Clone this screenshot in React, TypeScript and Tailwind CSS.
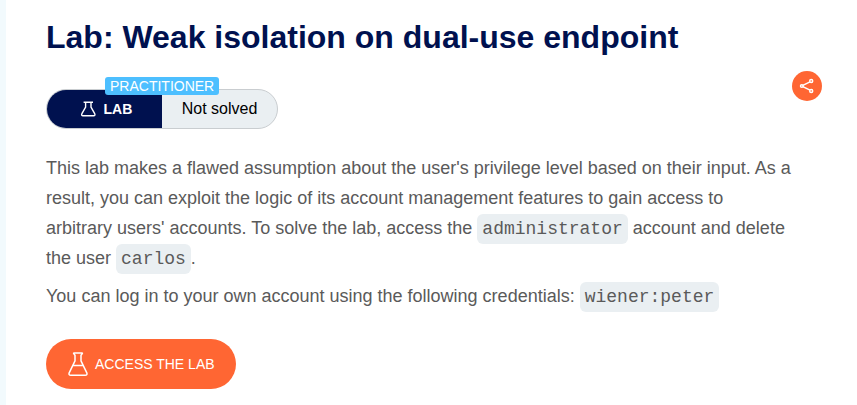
import type { ReactNode } from "react";

function Code({ children }: { children: ReactNode }) {
  return (
    <code className="relative top-px inline-block h-[30px] rounded-md bg-[#eaeff2] px-[5px] align-top font-['Liberation_Mono',monospace] text-[18px] leading-[30px]">
      {children}
    </code>
  );
}

function SmallFlask() {
  return (
    <svg className="h-4 w-4 shrink-0" viewBox="0 0 16 16" fill="none" stroke="white" strokeWidth="1.4" strokeLinejoin="round">
      <path d="M3.6 1.2H13M5.6 1.2V6.2L1.9 12.7Q1 14.8 3 14.8H13.6Q15.6 14.8 14.7 12.7L11 6.2V1.2" />
    </svg>
  );
}

function LargeFlask() {
  return (
    <svg className="h-6 w-5 shrink-0" viewBox="0 0 20 24" fill="none" stroke="#fff" strokeWidth="1.5" strokeLinejoin="round">
      <path d="M6 .9H14Q14.6 .9 14.3 1.6L13 3.3V8.8L18.8 20.8Q19.6 23.2 17.2 23.2H2.8Q.4 23.2 1.2 20.8L7 8.8V3.3L5.7 1.6Q5.4 .9 6 .9ZM4.6 13.4H15.4" />
    </svg>
  );
}

function ShareIcon() {
  return (
    <svg className="h-4 w-4" viewBox="0 0 16 16" fill="none" stroke="white" strokeWidth="1.5">
      <path d="M3.8 7.4L11 3.8M3.8 8.6L11 12.2" />
      <circle cx="2.8" cy="8" r="1.3" />
      <circle cx="12.2" cy="3.1" r="1.5" />
      <circle cx="12.2" cy="12.9" r="1.5" />
    </svg>
  );
}

export default function App() {
  return (
    <main className="h-[405px] w-[857px] overflow-hidden border-l-[6px] border-[#f2fafd] bg-white pl-10 pr-[35px] font-['Liberation_Sans',Arial,sans-serif] text-[#5a5a5a]">
      <h1 className="whitespace-nowrap pt-[17px] text-[32px] leading-10 font-bold text-[#00114f]">
        Lab: Weak isolation on dual-use endpoint
      </h1>
      <div className="mt-[14px] flex justify-between">
        <div className="relative mt-[18px] flex h-10 w-[232px] overflow-visible rounded-full border border-[#c9cdd0] bg-[#eaeff2]">
          <div className="flex w-[115px] items-center gap-[7.5px] rounded-l-full bg-[#00114f] pl-[33px] text-[14px] font-bold text-white">
            <SmallFlask />
            <span>LAB</span>
          </div>
          <div className="flex flex-1 items-center justify-center text-[16px] text-black">
            <span>Not solved</span>
          </div>
          <span className="absolute -top-[13px] left-[58px] h-[18px] rounded-[3px] bg-[#4dbfff] px-[5px] text-[14px] leading-[18px] text-white">
            PRACTITIONER
          </span>
        </div>
        <button aria-label="Share" className="flex size-[30px] items-center justify-center rounded-full bg-[#ff6633]">
          <ShareIcon />
        </button>
      </div>
      <p className="mt-6 whitespace-nowrap text-[18px] leading-[30px]">
        This lab makes a flawed assumption about the user's privilege level based on their input. As a<br />
        result, you can exploit the logic of its account management features to gain access to<br />
        arbitrary users' accounts. To solve the lab, access the <Code>administrator</Code> account and delete<br />
        the user <Code>carlos</Code>.
      </p>
      <p className="mt-2 whitespace-nowrap text-[18px] leading-[30px]">
        You can log in to your own account using the following credentials: <Code>wiener:peter</Code>
      </p>
      <button className="mt-7 flex h-[50px] w-[190px] items-center gap-[7.5px] rounded-full bg-[#ff6633] pl-[21.5px] text-[14px] text-white">
        <LargeFlask />
        <span className="whitespace-nowrap">ACCESS THE LAB</span>
      </button>
    </main>
  );
}
